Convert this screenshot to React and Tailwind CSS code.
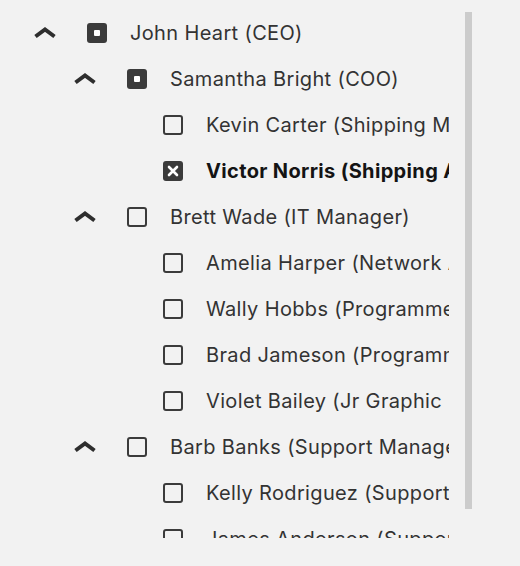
import React from 'react';

const rows = [
  { level: 0, label: 'John Heart (CEO)', state: 'partial', expander: true },
  { level: 1, label: 'Samantha Bright (COO)', state: 'partial', expander: true },
  { level: 2, label: 'Kevin Carter (Shipping Manager)', state: 'off' },
  { level: 2, label: 'Victor Norris (Shipping Assistant)', state: 'on' },
  { level: 1, label: 'Brett Wade (IT Manager)', state: 'off', expander: true },
  { level: 2, label: 'Amelia Harper (Network Admin)', state: 'off' },
  { level: 2, label: 'Wally Hobbs (Programmer)', state: 'off' },
  { level: 2, label: 'Brad Jameson (Programmer)', state: 'off' },
  { level: 2, label: 'Violet Bailey (Jr Graphic Designer)', state: 'off' },
  { level: 1, label: 'Barb Banks (Support Manager)', state: 'off', expander: true },
  { level: 2, label: 'Kelly Rodriguez (Support Assistant)', state: 'off' },
  { level: 2, label: 'James Anderson (Support Assistant)', state: 'off' },
];

const indent = ['pl-[87px]', 'pl-[127px]', 'pl-[163px]'];

function Chevron() {
  return (
    <svg width="24" height="12" viewBox="0 0 24 12" className="absolute -left-[54px] top-1/2 -translate-y-1/2">
      <polyline points="2.5,9.5 12,2.5 21.5,9.5" fill="none" stroke="#2e2e2e" strokeWidth="4" strokeLinejoin="miter" />
    </svg>
  );
}

function Check({ state }) {
  if (state === 'off') {
    return <div className="w-5 h-5 rounded-[3px] border-2 border-[#3b3b3b] shrink-0" />;
  }
  return (
    <div className="w-5 h-5 rounded-[3px] bg-[#3b3b3b] shrink-0 flex items-center justify-center">
      {state === 'partial' ? (
        <div className="w-[6px] h-[6px] rounded-[1px] bg-white" />
      ) : (
        <svg width="12" height="12" viewBox="0 0 12 12">
          <path d="M2 2 L10 10 M10 2 L2 10" stroke="white" strokeWidth="2.6" strokeLinecap="round" />
        </svg>
      )}
    </div>
  );
}

export default function App() {
  return (
    <div className="w-[520px] h-[566px] bg-[#f2f2f2] relative" style={{ fontFamily: 'Inter, "Noto Sans", sans-serif' }}>
      <div className="h-[10px]" />
      <div className="w-[449px] h-[528px] overflow-hidden">
        {rows.map((r, i) => (
          <div key={i} className={`h-[46px] flex items-center ${indent[r.level]}`}>
            <div className="relative flex items-center">
              {r.expander && <Chevron />}
              <Check state={r.state} />
            </div>
            <span
              className={`ml-[23px] text-[20px] tracking-[0.35px] whitespace-nowrap ${
                r.state === 'on' ? 'font-bold text-[#141414]' : 'text-[#333333]'
              }`}
            >
              {r.label}
            </span>
          </div>
        ))}
      </div>
      <div className="absolute left-[465px] top-[12px] w-[7px] h-[497px] bg-[#cccccc]" />
    </div>
  );
}
